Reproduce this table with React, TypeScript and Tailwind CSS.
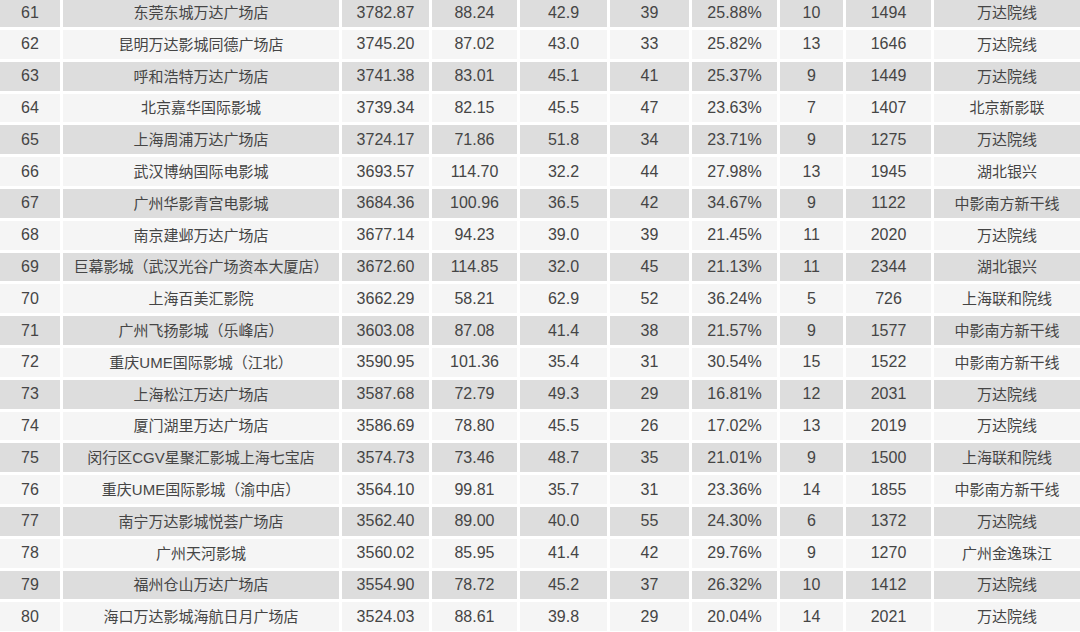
import React from "react";

const rows: string[][] = [
  ["61", "东莞东城万达广场店", "3782.87", "88.24", "42.9", "39", "25.88%", "10", "1494", "万达院线"],
  ["62", "昆明万达影城同德广场店", "3745.20", "87.02", "43.0", "33", "25.82%", "13", "1646", "万达院线"],
  ["63", "呼和浩特万达广场店", "3741.38", "83.01", "45.1", "41", "25.37%", "9", "1449", "万达院线"],
  ["64", "北京嘉华国际影城", "3739.34", "82.15", "45.5", "47", "23.63%", "7", "1407", "北京新影联"],
  ["65", "上海周浦万达广场店", "3724.17", "71.86", "51.8", "34", "23.71%", "9", "1275", "万达院线"],
  ["66", "武汉博纳国际电影城", "3693.57", "114.70", "32.2", "44", "27.98%", "13", "1945", "湖北银兴"],
  ["67", "广州华影青宫电影城", "3684.36", "100.96", "36.5", "42", "34.67%", "9", "1122", "中影南方新干线"],
  ["68", "南京建邺万达广场店", "3677.14", "94.23", "39.0", "39", "21.45%", "11", "2020", "万达院线"],
  ["69", "巨幕影城（武汉光谷广场资本大厦店）", "3672.60", "114.85", "32.0", "45", "21.13%", "11", "2344", "湖北银兴"],
  ["70", "上海百美汇影院", "3662.29", "58.21", "62.9", "52", "36.24%", "5", "726", "上海联和院线"],
  ["71", "广州飞扬影城（乐峰店）", "3603.08", "87.08", "41.4", "38", "21.57%", "9", "1577", "中影南方新干线"],
  ["72", "重庆UME国际影城（江北）", "3590.95", "101.36", "35.4", "31", "30.54%", "15", "1522", "中影南方新干线"],
  ["73", "上海松江万达广场店", "3587.68", "72.79", "49.3", "29", "16.81%", "12", "2031", "万达院线"],
  ["74", "厦门湖里万达广场店", "3586.69", "78.80", "45.5", "26", "17.02%", "13", "2019", "万达院线"],
  ["75", "闵行区CGV星聚汇影城上海七宝店", "3574.73", "73.46", "48.7", "35", "21.01%", "9", "1500", "上海联和院线"],
  ["76", "重庆UME国际影城（渝中店）", "3564.10", "99.81", "35.7", "31", "23.36%", "14", "1855", "中影南方新干线"],
  ["77", "南宁万达影城悦荟广场店", "3562.40", "89.00", "40.0", "55", "24.30%", "6", "1372", "万达院线"],
  ["78", "广州天河影城", "3560.02", "85.95", "41.4", "42", "29.76%", "9", "1270", "广州金逸珠江"],
  ["79", "福州仓山万达广场店", "3554.90", "78.72", "45.2", "37", "26.32%", "10", "1412", "万达院线"],
  ["80", "海口万达影城海航日月广场店", "3524.03", "88.61", "39.8", "29", "20.04%", "14", "2021", "万达院线"],
];

export default function App() {
  return (
    <div
      className="w-[1080px] h-[632px] overflow-hidden bg-white text-[#454545]"
      style={{ fontFamily: '"Liberation Sans", "Noto Sans CJK SC", sans-serif' }}
    >
      <div className="flex flex-col gap-[3px] mt-[-1.8px]">
        {rows.map((r, i) => (
          <div
            key={r[0]}
            className="grid grid-cols-[60px_276px_87px_85px_87px_79px_85px_63px_85px_146px] gap-[3px] h-[28.8px]"
          >
            {r.map((c, j) => (
              <div
                key={j}
                className={`flex items-center justify-center whitespace-nowrap leading-none ${
                  j === 1 || j === 9 ? "text-[15px]" : "text-[16px]"
                } ${i % 2 === 0 ? "bg-[#dddddd]" : "bg-[#f5f5f5]"}`}
              >
                {c}
              </div>
            ))}
          </div>
        ))}
      </div>
    </div>
  );
}
